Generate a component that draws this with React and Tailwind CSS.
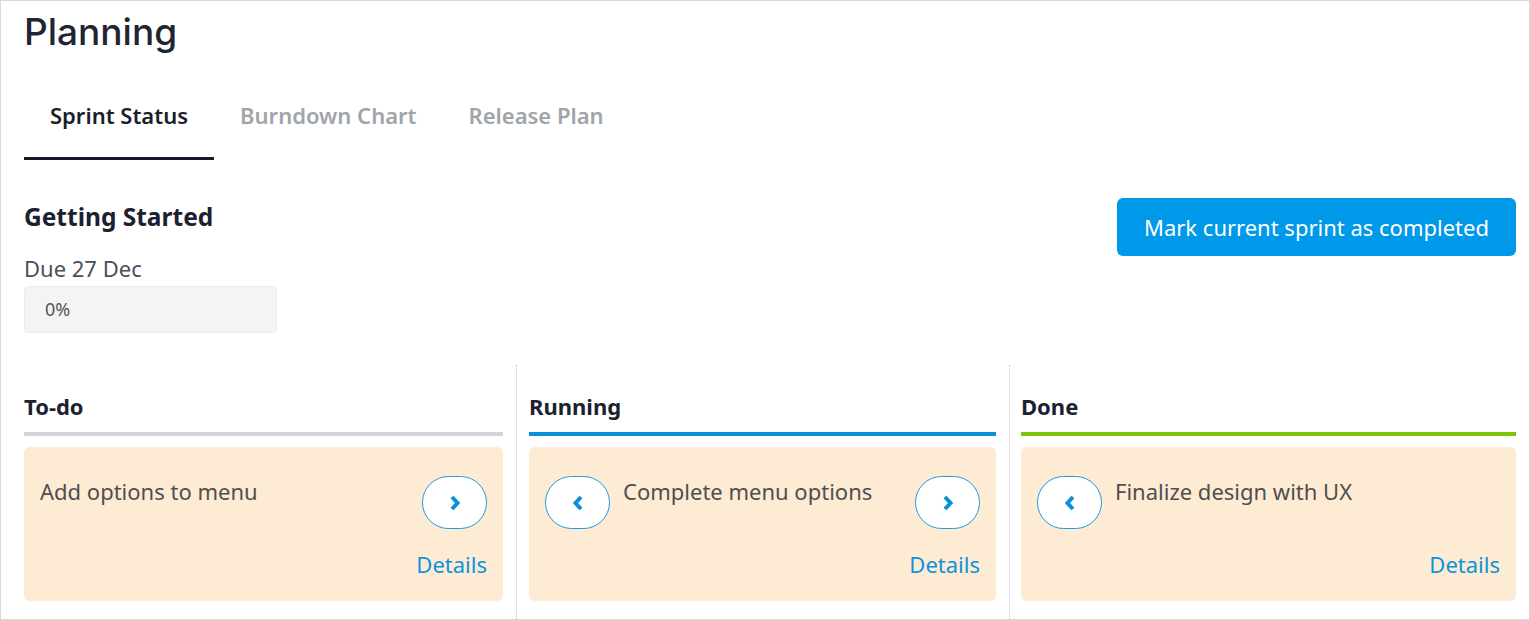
import React, { useState } from "react";

const tabs = ["Sprint Status", "Burndown Chart", "Release Plan"];

const columns = [
  {
    title: "To-do",
    bar: "bg-[#d4d4d4]",
    wrap: "w-[493px] pr-[13px] border-r border-dotted border-[#c4c4c4]",
    card: { text: "Add options to menu", prev: false, next: true },
  },
  {
    title: "Running",
    bar: "bg-[#0a90d8]",
    wrap: "w-[493px] pl-[12px] pr-[13px] border-r border-dotted border-[#c4c4c4]",
    card: { text: "Complete menu options", prev: true, next: true },
  },
  {
    title: "Done",
    bar: "bg-[#7cc70b]",
    wrap: "flex-1 pl-[11px]",
    card: { text: "Finalize design with UX", prev: true, next: false },
  },
];

function Chevron({ dir }) {
  return (
    <svg width="14" height="18" viewBox="0 0 14 18" fill="none">
      <polyline
        points={dir === "left" ? "10,3 4.5,9 10,15" : "4,3 9.5,9 4,15"}
        stroke="#0a90d8"
        strokeWidth="4"
      />
    </svg>
  );
}

function MoveButton({ dir }) {
  return (
    <button
      type="button"
      className="shrink-0 w-[65px] h-[53px] rounded-full border border-[#1a9be0] bg-white flex items-center justify-center"
    >
      <Chevron dir={dir} />
    </button>
  );
}

function TaskCard({ text, prev, next }) {
  return (
    <div className="mt-[11px] h-[154px] rounded-md bg-[#feebd3] px-4 pt-[29px] flex flex-col">
      <div className="flex items-start gap-[13px]">
        {prev && <MoveButton dir="left" />}
        <p className="flex-1 text-[22px] leading-[30px] text-[#4f4f4f]">{text}</p>
        {next && <MoveButton dir="right" />}
      </div>
      <div className="mt-auto mb-[22px] text-right">
        <a href="#" className="text-[22px] leading-[30px] text-[#0b94dc]">
          Details
        </a>
      </div>
    </div>
  );
}

export default function App() {
  const [active, setActive] = useState(0);

  return (
    <div
      className="w-[1530px] h-[620px] border border-[#d9d9d9] bg-white pl-[23px] pr-[13px] pt-[8px] flex flex-col overflow-hidden"
      style={{ fontFamily: '"Noto Sans", sans-serif' }}
    >
      <h1
        className="text-[37px] leading-[46px] font-medium text-[#1f2533]"
        style={{ fontFamily: "Inter, sans-serif" }}
      >
        Planning
      </h1>

      <div className="mt-[46px] flex">
        {tabs.map((t, i) => (
          <button
            key={t}
            type="button"
            onClick={() => setActive(i)}
            className={`px-[26px] pb-[28px] text-[22px] leading-[28px] font-semibold border-b-[3px] ${
              active === i
                ? "text-[#1b1f2b] border-[#161a2b]"
                : "text-[#a0a4ab] border-transparent"
            }`}
          >
            {t}
          </button>
        ))}
      </div>

      <div className="mt-[38px] flex justify-between items-start">
        <div className="pt-[3px]">
          <h2 className="text-[24.5px] leading-[32px] font-bold text-[#1c2130]">
            Getting Started
          </h2>
          <p className="mt-[21px] text-[22px] leading-[28px] text-[#4a4f5c]">
            Due 27 Dec
          </p>
          <div className="mt-[4px] w-[253px] h-[47px] rounded bg-[#f4f4f4] border border-[#ececec] pl-5 flex items-center text-[18px] text-[#555]">
            0%
          </div>
        </div>
        <button
          type="button"
          className="h-[58px] px-[27px] rounded-md bg-[#0099e9] text-white text-[22px]"
        >
          Mark current sprint as completed
        </button>
      </div>

      <div className="mt-[32px] flex flex-1">
        {columns.map((c) => (
          <div key={c.title} className={c.wrap}>
            <h3 className="pt-[26px] text-[22px] leading-[30px] font-bold text-[#1c2130]">
              {c.title}
            </h3>
            <div className={`mt-[11px] h-[4px] ${c.bar}`} />
            <TaskCard {...c.card} />
          </div>
        ))}
      </div>
    </div>
  );
}
